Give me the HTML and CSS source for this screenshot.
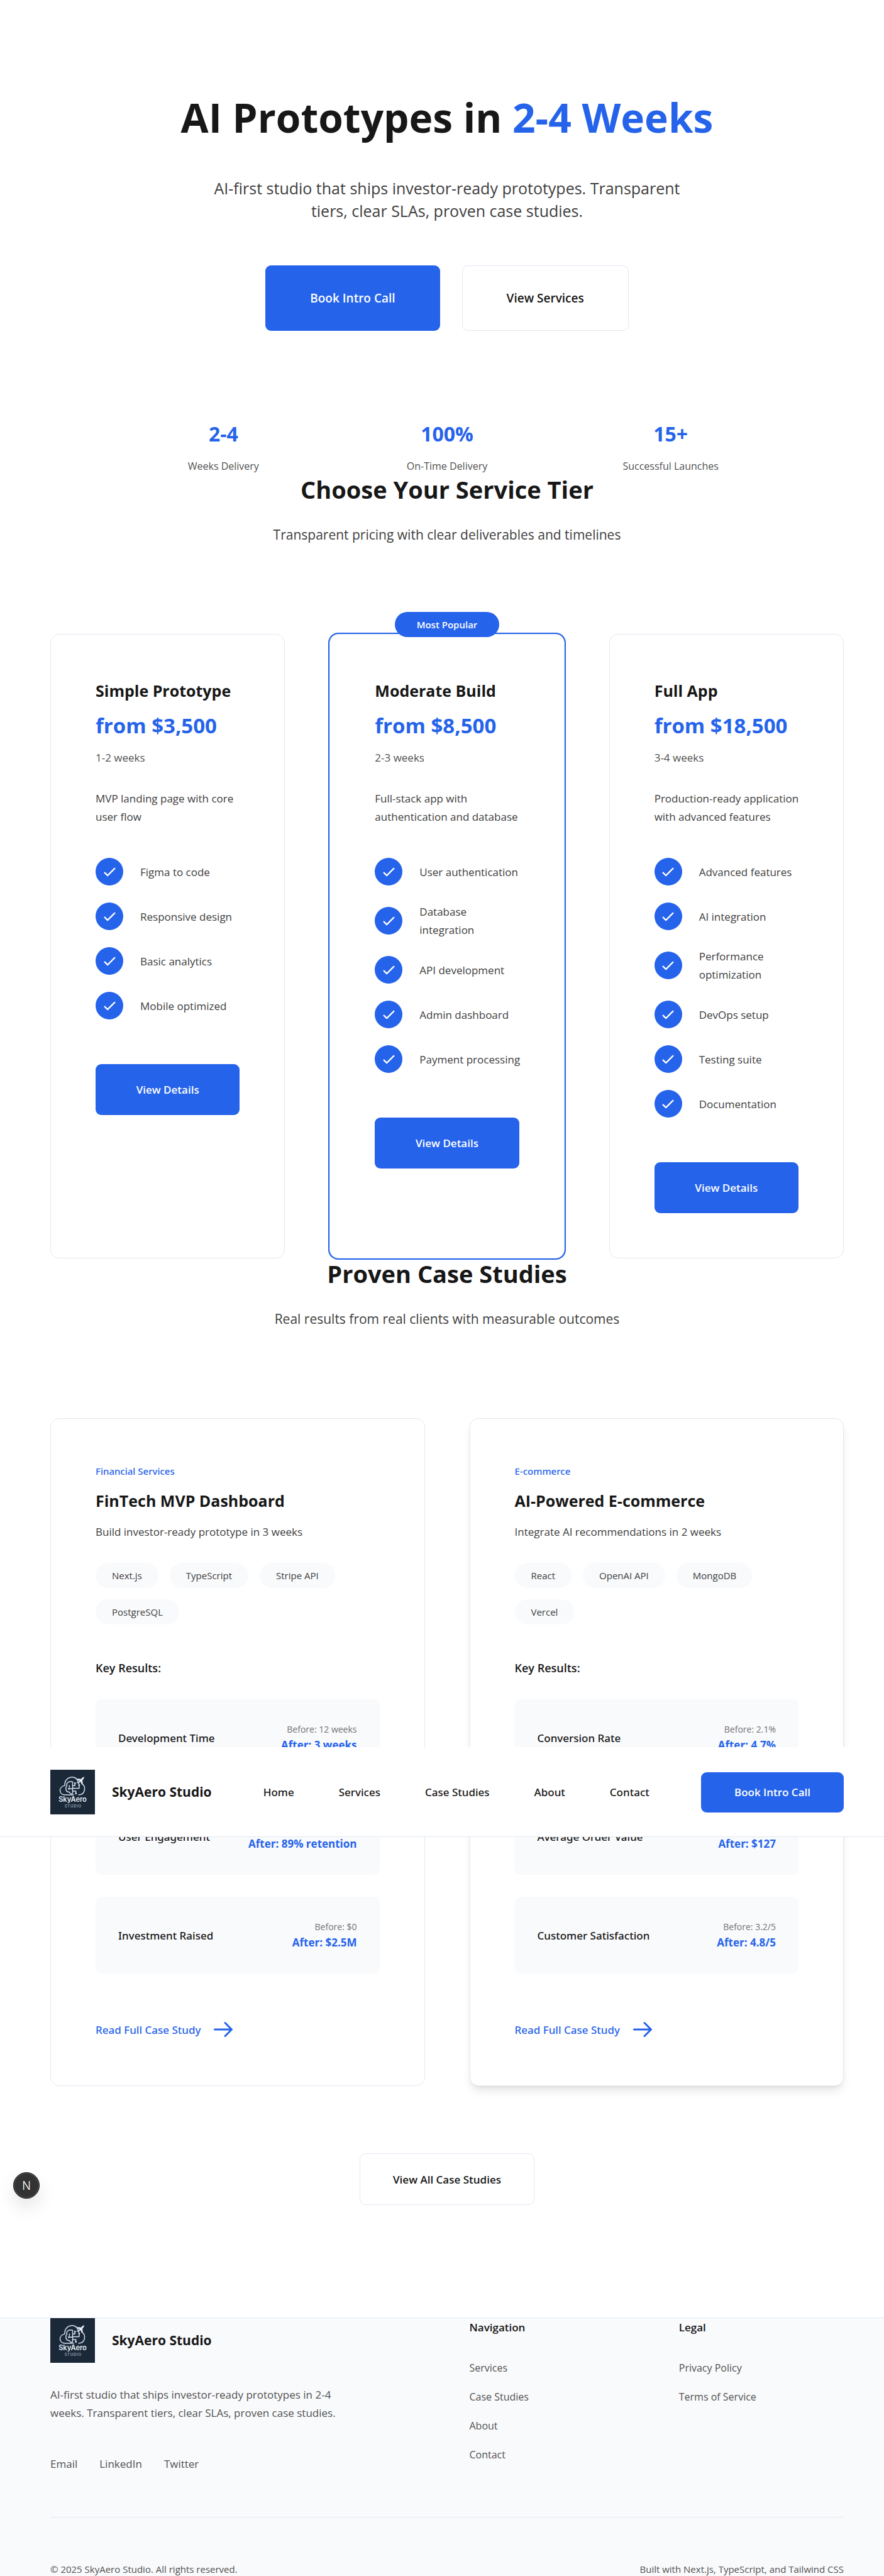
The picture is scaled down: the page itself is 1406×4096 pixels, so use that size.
FILE: index.html
```html
<!DOCTYPE html>
<html lang="en">
<head>
<meta charset="utf-8">
<meta name="viewport" content="width=device-width, initial-scale=1">
<title>SkyAero Studio</title>
<link rel="stylesheet" href="styles.css">
</head>
<body>
<svg class="sprite" aria-hidden="true">
  <symbol id="check" viewBox="0 0 24 24"><path d="M5 13l4 4L19 7" fill="none" stroke="currentColor" stroke-width="2" stroke-linecap="round" stroke-linejoin="round"/></symbol>
  <symbol id="arrow" viewBox="0 0 24 24"><path d="M14 5l7 7m0 0l-7 7m7-7H3" fill="none" stroke="currentColor" stroke-width="2" stroke-linecap="round" stroke-linejoin="round"/></symbol>
  <symbol id="logo" viewBox="0 0 96 96">
    <rect width="96" height="96" fill="#1b2838"/>
    <g fill="none" stroke="#d3dfec" stroke-width="2" stroke-linecap="round" stroke-linejoin="round">
      <path d="M50 54H32C18 54 17 37 31 34C30 13 56 10 60 26"/>
      <path d="M68 30C77 36 76 54 61 54"/>
      <path d="M48 26C38 23 33 31 36 34C31 40 34 49 41 48C43 53 48 53 48 50Z"/>
      <path d="M48 34H53V29M48 40H62V34M48 46H55V50M40 41H48M41 34V38"/>
      <circle cx="53" cy="29" r="1"/><circle cx="62" cy="33" r="1"/><circle cx="55" cy="51" r="1"/><circle cx="40" cy="41" r="1"/>
    </g>
    <path fill="#e3edf6" d="M73 15L69 17L66 20L59 19L57 21L63 24L60 27L57 27L56 28L60 29L61 32L62 31L62 28L65 26L68 32L70 30L69 23L72 19Z"/>
    <text class="logo-name" x="48" y="69" text-anchor="middle">SkyAero</text>
    <text class="logo-sub" x="49" y="81" text-anchor="middle">STUDIO</text>
  </symbol>
</svg>

<header class="site-header">
  <div class="wrap header-row">
    <a class="brand" href="#"><svg class="brand-logo"><use href="#logo"/></svg><span>SkyAero Studio</span></a>
    <nav class="main-nav">
      <a href="#">Home</a><a href="#services">Services</a><a href="#cases">Case Studies</a><a href="#">About</a><a href="#">Contact</a>
    </nav>
    <button class="btn btn-primary btn-nav" type="button">Book Intro Call</button>
  </div>
</header>

<main>
  <section class="hero wrap">
    <h1>AI Prototypes in <span class="accent">2-4 Weeks</span></h1>
    <p class="hero-text">AI-first studio that ships investor-ready prototypes. Transparent tiers, clear SLAs, proven case studies.</p>
    <div class="hero-actions">
      <button class="btn btn-primary btn-hero" type="button">Book Intro Call</button>
      <button class="btn btn-outline btn-hero" type="button">View Services</button>
    </div>
    <div class="stats">
      <div><div class="stat-num">2-4</div><div class="stat-label">Weeks Delivery</div></div>
      <div><div class="stat-num">100%</div><div class="stat-label">On-Time Delivery</div></div>
      <div><div class="stat-num">15+</div><div class="stat-label">Successful Launches</div></div>
    </div>
  </section>

  <section class="wrap" id="services">
    <h2>Choose Your Service Tier</h2>
    <p class="section-text">Transparent pricing with clear deliverables and timelines</p>
    <div class="tiers">
      <article class="card">
        <h3>Simple Prototype</h3>
        <p class="price">from $3,500</p>
        <p class="duration">1-2 weeks</p>
        <p class="tier-text">MVP landing page with core user flow</p>
        <ul class="features">
          <li><span class="tick"><svg><use href="#check"/></svg></span><span class="feature">Figma to code</span></li>
          <li><span class="tick"><svg><use href="#check"/></svg></span><span class="feature">Responsive design</span></li>
          <li><span class="tick"><svg><use href="#check"/></svg></span><span class="feature">Basic analytics</span></li>
          <li><span class="tick"><svg><use href="#check"/></svg></span><span class="feature">Mobile optimized</span></li>
        </ul>
        <button class="btn btn-primary btn-tier" type="button">View Details</button>
      </article>
      <article class="card card-popular">
        <span class="badge">Most Popular</span>
        <h3>Moderate Build</h3>
        <p class="price">from $8,500</p>
        <p class="duration">2-3 weeks</p>
        <p class="tier-text">Full-stack app with authentication and database</p>
        <ul class="features">
          <li><span class="tick"><svg><use href="#check"/></svg></span><span class="feature">User authentication</span></li>
          <li><span class="tick"><svg><use href="#check"/></svg></span><span class="feature">Database integration</span></li>
          <li><span class="tick"><svg><use href="#check"/></svg></span><span class="feature">API development</span></li>
          <li><span class="tick"><svg><use href="#check"/></svg></span><span class="feature">Admin dashboard</span></li>
          <li><span class="tick"><svg><use href="#check"/></svg></span><span class="feature">Payment processing</span></li>
        </ul>
        <button class="btn btn-primary btn-tier" type="button">View Details</button>
      </article>
      <article class="card">
        <h3>Full App</h3>
        <p class="price">from $18,500</p>
        <p class="duration">3-4 weeks</p>
        <p class="tier-text">Production-ready application with advanced features</p>
        <ul class="features">
          <li><span class="tick"><svg><use href="#check"/></svg></span><span class="feature">Advanced features</span></li>
          <li><span class="tick"><svg><use href="#check"/></svg></span><span class="feature">AI integration</span></li>
          <li><span class="tick"><svg><use href="#check"/></svg></span><span class="feature">Performance optimization</span></li>
          <li><span class="tick"><svg><use href="#check"/></svg></span><span class="feature">DevOps setup</span></li>
          <li><span class="tick"><svg><use href="#check"/></svg></span><span class="feature">Testing suite</span></li>
          <li><span class="tick"><svg><use href="#check"/></svg></span><span class="feature">Documentation</span></li>
        </ul>
        <button class="btn btn-primary btn-tier" type="button">View Details</button>
      </article>
    </div>
  </section>

  <section class="wrap" id="cases">
    <h2>Proven Case Studies</h2>
    <p class="section-text">Real results from real clients with measurable outcomes</p>
    <div class="cases">
      <article class="card">
        <p class="industry">Financial Services</p>
        <h3 class="case-title">FinTech MVP Dashboard</h3>
        <p class="case-text">Build investor-ready prototype in 3 weeks</p>
        <ul class="tags"><li>Next.js</li><li>TypeScript</li><li>Stripe API</li><li>PostgreSQL</li></ul>
        <h4>Key Results:</h4>
        <div class="results">
          <div class="result"><span class="metric">Development Time</span><div class="change"><p class="before">Before: 12 weeks</p><p class="after">After: 3 weeks</p></div></div>
          <div class="result"><span class="metric">User Engagement</span><div class="change"><p class="before">Before: 0%</p><p class="after">After: 89% retention</p></div></div>
          <div class="result"><span class="metric">Investment Raised</span><div class="change"><p class="before">Before: $0</p><p class="after">After: $2.5M</p></div></div>
        </div>
        <a class="more" href="#">Read Full Case Study<svg><use href="#arrow"/></svg></a>
      </article>
      <article class="card card-raised">
        <p class="industry">E-commerce</p>
        <h3 class="case-title">AI-Powered E-commerce</h3>
        <p class="case-text">Integrate AI recommendations in 2 weeks</p>
        <ul class="tags"><li>React</li><li>OpenAI API</li><li>MongoDB</li><li>Vercel</li></ul>
        <h4>Key Results:</h4>
        <div class="results">
          <div class="result"><span class="metric">Conversion Rate</span><div class="change"><p class="before">Before: 2.1%</p><p class="after">After: 4.7%</p></div></div>
          <div class="result"><span class="metric">Average Order Value</span><div class="change"><p class="before">Before: $85</p><p class="after">After: $127</p></div></div>
          <div class="result"><span class="metric">Customer Satisfaction</span><div class="change"><p class="before">Before: 3.2/5</p><p class="after">After: 4.8/5</p></div></div>
        </div>
        <a class="more" href="#">Read Full Case Study<svg><use href="#arrow"/></svg></a>
      </article>
    </div>
    <div class="all-cases"><button class="btn btn-outline btn-all" type="button">View All Case Studies</button></div>
  </section>
</main>

<footer class="site-footer">
  <div class="wrap">
    <div class="footer-grid">
      <div class="footer-about">
        <a class="brand" href="#"><svg class="brand-logo"><use href="#logo"/></svg><span>SkyAero Studio</span></a>
        <p class="footer-text">AI-first studio that ships investor-ready prototypes in 2-4 weeks. Transparent tiers, clear SLAs, proven case studies.</p>
        <div class="social"><a href="#">Email</a><a href="#">LinkedIn</a><a href="#">Twitter</a></div>
      </div>
      <div>
        <h5>Navigation</h5>
        <ul class="footer-links"><li><a href="#">Services</a></li><li><a href="#">Case Studies</a></li><li><a href="#">About</a></li><li><a href="#">Contact</a></li></ul>
      </div>
      <div>
        <h5>Legal</h5>
        <ul class="footer-links"><li><a href="#">Privacy Policy</a></li><li><a href="#">Terms of Service</a></li></ul>
      </div>
    </div>
    <div class="footer-bottom"><p>© 2025 SkyAero Studio. All rights reserved.</p><p>Built with Next.js, TypeScript, and Tailwind CSS</p></div>
  </div>
</footer>

<button class="dev-badge" type="button" aria-label="Open developer tools">N</button>
</body>
</html>
```
FILE: styles.css
```css
:root {
  --blue: #2563eb;
  --ink: #171717;
  --body: #404040;
  --muted: #525252;
  --faint: #737373;
  --line: #e2e8f0;
  --soft: #f9fafc;
  --sans: "Open Sans", "Noto Sans", sans-serif;
  --sans-medium: "Noto Sans", "Open Sans", sans-serif;
}
* { box-sizing: border-box; margin: 0; padding: 0; }
body {
  position: relative;
  background: #fff;
  color: var(--ink);
  font-family: var(--sans);
  font-size: 17px;
  line-height: 29px;
}
a { color: inherit; text-decoration: none; }
ul { list-style: none; }
.sprite { display: none; }
.wrap { padding: 0 64px 0 80px; }
.accent { color: var(--blue); }

/* Buttons */
.btn {
  border: 1px solid transparent;
  border-radius: 9px;
  font: 600 17px/29px var(--sans);
  white-space: nowrap;
  cursor: pointer;
}
.btn-primary { background: var(--blue); color: #fff; }
.btn-outline { background: #fff; color: var(--ink); border-color: var(--line); }
.btn-hero { height: 104px; padding: 0 70px; font-size: 19px; }
.btn-tier { width: 100%; height: 81px; }
.btn-nav { height: 64px; padding: 0 52px; }
.btn-all { height: 82px; padding: 0 52px; }

/* Brand */
.brand { display: flex; align-items: center; gap: 27px; font-size: 21px; font-weight: 700; white-space: nowrap; }
.brand-logo { width: 71px; height: 71px; flex: none; }
.logo-name { font: 600 15px Inter, sans-serif; fill: #e3edf6; }
.logo-sub { font: 500 8px Inter, sans-serif; letter-spacing: 1px; fill: #aebccb; }

.site-header {
  position: absolute;
  z-index: 10;
  top: 2778px;
  left: 0;
  right: 0;
  background: #fff;
  border-bottom: 1px solid var(--line);
}
.header-row { display: flex; align-items: center; justify-content: space-between; padding-top: 36px; padding-bottom: 35px; }
.main-nav { display: flex; gap: 71px; font: 500 17px/29px var(--sans-medium); }

/* Hero */
.hero { padding-top: 147px; text-align: center; }
h1 { font-size: 64px; line-height: 80px; font-weight: 700; }
.hero-text { max-width: 800px; margin: 54px auto 0; font-size: 25px; line-height: 36px; color: var(--body); }
.hero-actions { display: flex; justify-content: center; gap: 35px; margin-top: 69px; }
.stats { display: grid; grid-template-columns: repeat(3, 1fr); gap: 71px; max-width: 996px; margin: 144px auto 0; }
.stat-num { font-size: 32px; line-height: 40px; font-weight: 700; color: var(--blue); }
.stat-label { margin-top: 18px; font-size: 16px; line-height: 26px; color: var(--muted); }

/* Section heads */
h2 { padding-top: 1px; font-size: 38px; line-height: 46px; font-weight: 700; text-align: center; }
.section-text { margin: 33px 0 142px; font-size: 21px; line-height: 32px; text-align: center; color: var(--body); }

/* Cards */
.card { position: relative; padding: 71px; background: #fff; border: 1px solid var(--line); border-radius: 14px; }
.card-popular { box-shadow: 0 0 0 2px var(--blue); }
.card-raised { box-shadow: 0 10px 16px -3px rgba(0, 0, 0, 0.1), 0 4px 6px -4px rgba(0, 0, 0, 0.1); }
h3 { font-size: 25px; line-height: 36px; font-weight: 700; }
.badge {
  position: absolute;
  top: -36px;
  left: 0;
  right: 0;
  width: fit-content;
  margin: 0 auto;
  padding: 0 35px;
  border-radius: 20px;
  background: var(--blue);
  color: #fff;
  font-size: 15px;
  line-height: 40px;
  font-weight: 600;
}

/* Service tiers */
.tiers { display: grid; grid-template-columns: repeat(3, 1fr); gap: 71px; }
.price { margin-top: 16px; font-size: 33px; line-height: 44px; font-weight: 700; color: var(--blue); }
.duration { margin-top: 15px; line-height: 28px; color: var(--muted); }
.tier-text { margin: 36px -4px 0 0; color: var(--body); }
.features { display: grid; gap: 27px; margin: 51px -4px 71px 0; }
.features li { display: flex; align-items: center; gap: 27px; }
.feature { color: var(--body); }
.tick { display: flex; align-items: center; justify-content: center; flex: none; width: 44px; height: 44px; border-radius: 50%; background: var(--blue); color: #fff; }
.tick svg { width: 27px; height: 27px; }

/* Case studies */
.cases { display: grid; grid-template-columns: repeat(2, 1fr); gap: 71px; }
.industry { font: 500 15px/24px var(--sans-medium); color: var(--blue); }
.case-title { margin-top: 17px; }
.case-text { margin-top: 17px; color: var(--body); }
.tags { display: flex; flex-wrap: wrap; gap: 18px; margin-top: 35px; }
.tags li { padding: 0 26px; border-radius: 20px; background: var(--soft); font-size: 15px; line-height: 40px; color: var(--body); }
h4 { margin-top: 55px; font-size: 18px; line-height: 28px; font-weight: 600; }
.results { display: grid; gap: 35px; margin-top: 36px; }
.result { display: flex; align-items: center; justify-content: space-between; padding: 36px; border-radius: 9px; background: var(--soft); }
.metric { font: 500 17px/29px var(--sans-medium); }
.change { text-align: right; }
.before { font-size: 14px; line-height: 23px; color: var(--faint); }
.after { line-height: 27px; font-weight: 700; color: var(--blue); }
.more { display: flex; align-items: center; gap: 18px; width: fit-content; margin-top: 71px; font: 500 17px/29px var(--sans-medium); color: var(--blue); }
.more svg { width: 36px; height: 36px; }
.all-cases { display: flex; justify-content: center; margin-top: 107px; }

/* Footer */
.site-footer { margin-top: 179px; border-top: 1px solid var(--line); background: var(--soft); color: var(--muted); }
.site-footer .brand, h5 { color: var(--ink); }
.footer-grid { display: grid; grid-template-columns: repeat(4, 1fr); gap: 71px; }
.footer-about { grid-column: span 2; }
.footer-text { max-width: 480px; margin-top: 36px; }
.social { display: flex; gap: 35px; margin-top: 54px; line-height: 26px; }
h5 { font-size: 17px; line-height: 29px; font-weight: 600; }
.footer-links { display: grid; gap: 18px; margin-top: 36px; font-size: 16px; line-height: 28px; }
.footer-bottom { display: flex; justify-content: space-between; margin-top: 71px; padding-top: 72px; border-top: 1px solid var(--line); font-size: 15px; line-height: 21px; }

/* Floating developer button */
.dev-badge {
  position: absolute;
  z-index: 11;
  top: 3454px;
  left: 21px;
  width: 42px;
  height: 42px;
  border: 1px solid #111;
  border-radius: 50%;
  background: #333;
  box-shadow: inset 0 0 0 1px #5a5a5a, 0 14px 28px rgba(0, 0, 0, 0.1);
  color: #fff;
  font: 300 18px Inter, sans-serif;
  cursor: pointer;
}
```
